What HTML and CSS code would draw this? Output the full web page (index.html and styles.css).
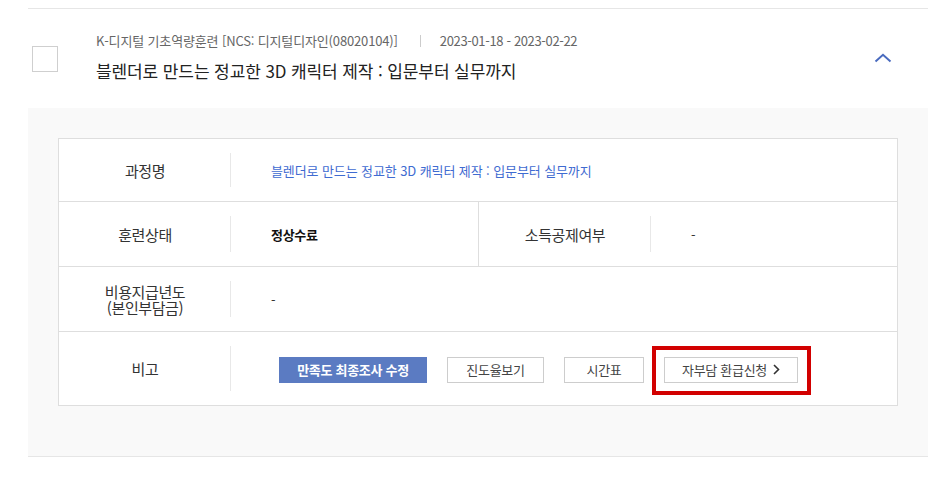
FILE: index.html
```html
<!DOCTYPE html>
<html lang="ko">
<head>
<meta charset="utf-8">
<title>수강내역</title>
<link rel="stylesheet" href="styles.css">
</head>
<body>

  <div class="course">

    <div class="course-head">
      <span class="check"></span>
      <div class="course-info">
        <p class="course-meta">
          <span>K-디지털 기초역량훈련 [NCS: 디지털디자인(08020104)]</span>
          <span class="bar"></span>
          <span class="date">2023-01-18 - 2023-02-22</span>
        </p>
        <p class="course-title">블렌더로 만드는 정교한 3D 캐릭터 제작 : 입문부터 실무까지</p>
      </div>
      <svg class="toggle" width="18" height="10" viewBox="0 0 18 10">
        <polyline points="1.5,8.5 9,1.8 16.5,8.5" fill="none" stroke="#4a6bbf" stroke-width="2"/>
      </svg>
    </div>

    <div class="course-detail">
      <div class="info">

        <div class="row">
          <div class="th">과정명</div>
          <div class="td link">블렌더로 만드는 정교한 3D 캐릭터 제작 : 입문부터 실무까지</div>
        </div>

        <div class="row">
          <div class="th">훈련상태</div>
          <div class="td half strong">정상수료</div>
          <div class="th">소득공제여부</div>
          <div class="td">-</div>
        </div>

        <div class="row">
          <div class="th two-line">비용지급년도<br>(본인부담금)</div>
          <div class="td">-</div>
        </div>

        <div class="row tall">
          <div class="th">비고</div>
          <div class="td buttons">
            <a class="btn primary" href="#">만족도 최종조사 수정</a>
            <a class="btn w97" href="#">진도율보기</a>
            <a class="btn w80" href="#">시간표</a>
            <span class="mark">
              <a class="btn w134" href="#">자부담 환급신청
                <svg class="arrow" width="7" height="11" viewBox="0 0 7 11">
                  <polyline points="1,1 5.5,5.5 1,10" fill="none" stroke="#333" stroke-width="1.6"/>
                </svg>
              </a>
            </span>
          </div>
        </div>

      </div>
    </div>

  </div>

</body>
</html>
```

FILE: styles.css
```css
body {
    margin: 0;
    padding-top: 8px;
    background: #fff;
    font-family: "Noto Sans CJK KR", "Noto Sans", sans-serif;
    color: #333;
}

a {
    text-decoration: none;
}

p {
    margin: 0;
}

.course {
    width: 900px;
    margin-left: 28px;
    border-top: 1px solid #e6e6e6;
}

/* head */
.course-head {
    height: 99px;
    display: flex;
    align-items: center;
    padding-left: 4px;
    box-sizing: border-box;
}

.check {
    width: 24px;
    height: 24px;
    border: 1px solid #cfcfcf;
    background: #fff;
    margin-top: 1px;
}

.course-info {
    margin-left: 38px;
    flex: 1;
    padding-bottom: 4px;
}

.course-meta {
    font-size: 13px;
    color: #666;
    letter-spacing: -0.15px;
    display: flex;
    align-items: center;
    line-height: 20px;
}

.course-meta .bar {
    width: 1px;
    height: 12px;
    background: #ccc;
    margin: 0 19px 0 22px;
}

.course-meta .date {
    letter-spacing: -0.35px;
}

.course-title {
    margin-top: 8px;
    font-size: 17px;
    color: #222;
    letter-spacing: -0.1px;
    line-height: 24px;
}

.toggle {
    margin-right: 36px;
    margin-bottom: 2px;
}

/* detail */
.course-detail {
    background: #f9f9f9;
    padding: 30px 30px 50px;
    border-bottom: 1px solid #e6e6e6;
}

.info {
    border: 1px solid #dedede;
    background: #fff;
}

.row {
    display: flex;
    height: 64px;
    border-top: 1px solid #dedede;
}

.row:first-child {
    border-top: 0;
    height: 62px;
}

.row.tall {
    height: 73px;
}

.th {
    width: 172px;
    flex: none;
    display: flex;
    align-items: center;
    justify-content: center;
    text-align: center;
    font-size: 15px;
    color: #333;
    letter-spacing: -0.4px;
    position: relative;
}

.th::after {
    content: "";
    position: absolute;
    right: 0;
    top: 14px;
    bottom: 14px;
    width: 1px;
    background: #e8e8e8;
}

.th.two-line {
    line-height: 16px;
    padding-top: 2px;
}

.td {
    flex: 1;
    display: flex;
    align-items: center;
    padding-left: 40px;
    font-size: 13px;
    color: #333;
    letter-spacing: -0.3px;
}

.td.half {
    flex: none;
    width: 207px;
    border-right: 1px solid #dedede;
}

.td.link {
    color: #3f6bd1;
    letter-spacing: -0.1px;
}

.td.strong {
    color: #111;
    font-weight: bold;
}

/* buttons */
.buttons {
    padding-left: 48px;
    gap: 20px;
    padding-top: 2px;
}

.btn {
    height: 26px;
    box-sizing: border-box;
    display: flex;
    align-items: center;
    justify-content: center;
    border: 1px solid #cdcdcd;
    background: #fff;
    color: #444;
    font-size: 13px;
    letter-spacing: -0.3px;
}

.btn.primary {
    width: 148px;
    background: #5b7bc2;
    border-color: #5b7bc2;
    color: #fff;
    font-weight: bold;
}

.btn.w97 { width: 97px; }
.btn.w80 { width: 80px; }
.btn.w134 { width: 134px; }

.btn .arrow {
    margin-left: 6px;
}

.mark {
    position: relative;
}

.mark::after {
    content: "";
    position: absolute;
    left: -12px;
    right: -13px;
    top: -11px;
    bottom: -12px;
    border: 4px solid #d20000;
}
```
